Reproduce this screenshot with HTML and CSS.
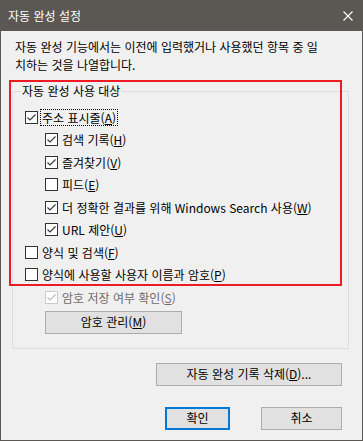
FILE: index.html
```html
<!DOCTYPE html>
<html lang="ko">
<head>
    <meta charset="UTF-8">
    <title>자동 완성 설정</title>
    <link rel="stylesheet" href="styles.css">
</head>
<body>
    <div class="window">
        <div class="titlebar">
            <span class="title">자동 완성 설정</span>
            <svg class="close" width="10" height="10" viewBox="0 0 10 10">
                <path d="M0.5 0.5L9.5 9.5M9.5 0.5L0.5 9.5" stroke="#fff" stroke-width="1.1" fill="none"/>
            </svg>
        </div>

        <p class="desc">자동 완성 기능에서는 이전에 입력했거나 사용했던 항목 중 일<br>치하는 것을 나열합니다.</p>

        <fieldset class="group">
            <legend>자동 완성 사용 대상</legend>

            <div class="opt">
                <svg class="box" viewBox="0 0 13 13"><rect x="0.5" y="0.5" width="12" height="12"/><path d="M2.5 6.5L5 9L10.5 3.5"/></svg>
                <span class="lbl focus">주소 표시줄(<u>A</u>)</span>
            </div>
            <div class="opt sub">
                <svg class="box" viewBox="0 0 13 13"><rect x="0.5" y="0.5" width="12" height="12"/><path d="M2.5 6.5L5 9L10.5 3.5"/></svg>
                <span class="lbl">검색 기록(<u>H</u>)</span>
            </div>
            <div class="opt sub">
                <svg class="box" viewBox="0 0 13 13"><rect x="0.5" y="0.5" width="12" height="12"/><path d="M2.5 6.5L5 9L10.5 3.5"/></svg>
                <span class="lbl">즐겨찾기(<u>V</u>)</span>
            </div>
            <div class="opt sub">
                <svg class="box" viewBox="0 0 13 13"><rect x="0.5" y="0.5" width="12" height="12"/></svg>
                <span class="lbl">피드(<u>E</u>)</span>
            </div>
            <div class="opt sub">
                <svg class="box" viewBox="0 0 13 13"><rect x="0.5" y="0.5" width="12" height="12"/><path d="M2.5 6.5L5 9L10.5 3.5"/></svg>
                <span class="lbl">더 정확한 결과를 위해 Windows Search 사용(<u>W</u>)</span>
            </div>
            <div class="opt sub">
                <svg class="box" viewBox="0 0 13 13"><rect x="0.5" y="0.5" width="12" height="12"/><path d="M2.5 6.5L5 9L10.5 3.5"/></svg>
                <span class="lbl">URL 제안(<u>U</u>)</span>
            </div>
            <div class="opt">
                <svg class="box" viewBox="0 0 13 13"><rect x="0.5" y="0.5" width="12" height="12"/></svg>
                <span class="lbl">양식 및 검색(<u>F</u>)</span>
            </div>
            <div class="opt">
                <svg class="box" viewBox="0 0 13 13"><rect x="0.5" y="0.5" width="12" height="12"/></svg>
                <span class="lbl">양식에 사용할 사용자 이름과 암호(<u>P</u>)</span>
            </div>
            <div class="opt sub disabled">
                <svg class="box" viewBox="0 0 13 13"><rect x="0.5" y="0.5" width="12" height="12"/><path d="M2.5 6.5L5 9L10.5 3.5"/></svg>
                <span class="lbl">암호 저장 여부 확인(<u>S</u>)</span>
            </div>

            <button type="button" class="btn pw-btn">암호 관리(<u>M</u>)</button>
        </fieldset>

        <div class="clear-row">
            <button type="button" class="btn clear-btn">자동 완성 기록 삭제(<u>D</u>)...</button>
        </div>

        <div class="footer">
            <button type="button" class="btn ok-btn">확인</button>
            <button type="button" class="btn cancel-btn">취소</button>
        </div>

        <!-- red annotation box drawn over the dialog -->
        <div class="highlight"></div>
    </div>
</body>
</html>
```

FILE: styles.css
```css
body {
    margin: 0;
    padding: 0;
    background-color: #f0f0f0;
    font-family: "Noto Sans CJK KR", "Noto Sans", sans-serif;
    font-size: 12px;
    color: #000;
}

.window {
    position: relative;
    width: 363px;
    height: 441px;
    box-sizing: border-box;
    border: 1px solid #5b5753;
    border-top: none;
    background-color: #f0f0f0;
    overflow: hidden;
}

.titlebar {
    height: 31px;
    background-color: #5b5753;
    color: #fff;
    display: flex;
    align-items: center;
    justify-content: space-between;
    padding: 0 10px 0 8px;
    margin: 0 -1px;
}

.title {
    font-size: 12px;
    line-height: 16px;
}

.close {
    display: block;
}

.desc {
    margin: 7px 0 0 14px;
    line-height: 18px;
    white-space: nowrap;
}

.group {
    margin: 9px 0 0 11px;
    width: 337px;
    box-sizing: border-box;
    border: 1px solid #dcdcdc;
    padding: 7px 0 14px 8px;
}

.group legend {
    padding: 0 1px;
    line-height: 16px;
}

.opt {
    height: 22.5px;
    display: flex;
    align-items: center;
    padding-left: 4px;
    white-space: nowrap;
}

.opt.sub {
    padding-left: 24px;
}

.box {
    width: 13px;
    height: 13px;
    flex-shrink: 0;
    margin-right: 3px;
}

.box rect {
    fill: #fff;
    stroke: #333;
}

.box path {
    fill: none;
    stroke: #333;
    stroke-width: 1.1;
}

.lbl {
    line-height: 15px;
    padding: 0 1px;
}

.lbl u {
    text-underline-offset: 1px;
}

.focus {
    outline: 1px dotted #000;
}

.disabled .lbl {
    color: #6d6d6d;
}

.disabled .box rect {
    stroke: #cccccc;
}

.disabled .box path {
    stroke: #bcbcbc;
}

.btn {
    font-family: inherit;
    font-size: 12px;
    color: #000;
    background-color: #e1e1e1;
    border: 1px solid #adadad;
    height: 23px;
    padding: 0;
    line-height: 16px;
}

.pw-btn {
    display: block;
    width: 137px;
    margin: 2px 0 0 24px;
}

.clear-row {
    display: flex;
    justify-content: flex-end;
    padding-right: 20px;
    margin-top: 14px;
}

.clear-btn {
    width: 186px;
}

.footer {
    display: flex;
    justify-content: flex-end;
    gap: 31px;
    padding-right: 20px;
    margin-top: 21px;
}

.ok-btn {
    width: 65px;
    border: 2px solid #0078d7;
}

.cancel-btn {
    width: 81px;
}

.highlight {
    position: absolute;
    left: 8px;
    top: 80px;
    width: 333px;
    height: 206px;
    box-sizing: border-box;
    border: 2px solid #ed1c24;
}
```
